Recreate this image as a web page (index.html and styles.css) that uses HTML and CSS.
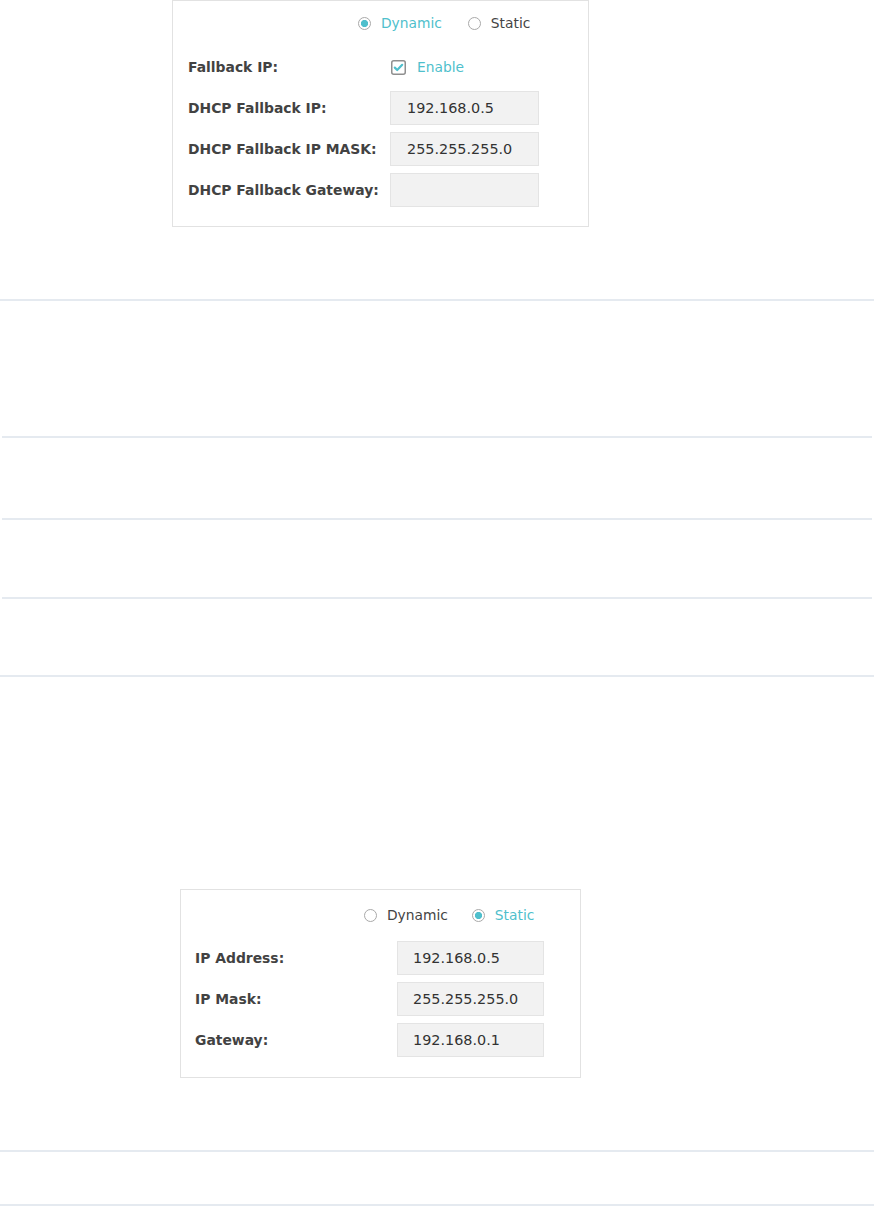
FILE: index.html
```html
<!DOCTYPE html>
<html lang="en">
<head>
<meta charset="utf-8">
<title>IP Settings</title>
<link rel="stylesheet" href="styles.css">
</head>
<body>
<div class="page">
  <div class="panel panel-a">
    <div class="radio-row">
      <span class="radio-item"><span class="radio checked"></span><span class="radio-text active">Dynamic</span></span>
      <span class="radio-item"><span class="radio"></span><span class="radio-text">Static</span></span>
    </div>
    <div class="row row-check">
      <span class="label">Fallback IP:</span>
      <span class="check-item">
        <svg class="checkbox" width="15" height="15" viewBox="0 0 15 15"><rect x="0.75" y="0.75" width="13.5" height="13.5" rx="2" fill="#fff" stroke="#8f8f8f" stroke-width="1.5"/><path d="M3.8 7.6 L6.2 10 L11.2 4.8" fill="none" stroke="#4fbfcc" stroke-width="2.2" stroke-linecap="round" stroke-linejoin="round"/></svg>
        <span class="radio-text active">Enable</span>
      </span>
    </div>
    <div class="fields">
      <div class="row"><span class="label">DHCP Fallback IP:</span><span class="input">192.168.0.5</span></div>
      <div class="row"><span class="label">DHCP Fallback IP MASK:</span><span class="input">255.255.255.0</span></div>
      <div class="row"><span class="label">DHCP Fallback Gateway:</span><span class="input"></span></div>
    </div>
  </div>

  <div class="rule r1"></div>
  <div class="rule inset r2"></div>
  <div class="rule inset r3"></div>
  <div class="rule inset r4"></div>
  <div class="rule r5"></div>

  <div class="panel panel-b">
    <div class="radio-row">
      <span class="radio-item"><span class="radio"></span><span class="radio-text">Dynamic</span></span>
      <span class="radio-item"><span class="radio checked"></span><span class="radio-text active">Static</span></span>
    </div>
    <div class="fields">
      <div class="row"><span class="label">IP Address:</span><span class="input">192.168.0.5</span></div>
      <div class="row"><span class="label">IP Mask:</span><span class="input">255.255.255.0</span></div>
      <div class="row"><span class="label">Gateway:</span><span class="input">192.168.0.1</span></div>
    </div>
  </div>

  <div class="rule r6"></div>
  <div class="rule r7"></div>
</div>
</body>
</html>
```

FILE: styles.css
```css
html, body {
  margin: 0;
  padding: 0;
  background: #ffffff;
}
body {
  font-family: "DejaVu Sans", Verdana, sans-serif;
  color: #333333;
}
.page {
  display: flex;
  flex-direction: column;
  width: 874px;
}
.panel {
  box-sizing: border-box;
  border: 1px solid #e2e2e2;
  align-self: flex-start;
}
.panel-a {
  margin-left: 172px;
  width: 417px;
  padding: 12px 0 19px 15px;
}
.panel-b {
  margin-top: 212px;
  margin-left: 180px;
  width: 401px;
  padding: 15px 0 20px 14px;
}
.radio-row {
  display: flex;
  align-items: center;
  height: 20px;
  padding-left: 170px;
  gap: 26px;
}
.panel-b .radio-row {
  padding-left: 169px;
  gap: 24px;
}
.radio-item {
  display: flex;
  align-items: center;
  gap: 10px;
}
.radio {
  box-sizing: border-box;
  width: 13px;
  height: 13px;
  border: 1px solid #a9a9a9;
  border-radius: 50%;
  background: #ffffff;
}
.radio.checked {
  background: radial-gradient(circle, #4fbfcc 0 3.3px, #ffffff 3.9px);
}
.radio-text {
  font-size: 13.8px;
  color: #444444;
}
.radio-text.active {
  color: #4fbfcc;
}
.row {
  display: flex;
  align-items: center;
}
.row-check {
  height: 20px;
  margin-top: 24px;
}
.label {
  width: 202px;
  flex: none;
  font-size: 13.9px;
  font-weight: bold;
  color: #424242;
}
.check-item {
  display: flex;
  align-items: center;
  gap: 11px;
  margin-left: 1px;
}
.checkbox {
  display: block;
}
.fields {
  display: flex;
  flex-direction: column;
  gap: 7px;
  margin-top: 14px;
}
.panel-b .fields {
  margin-top: 16px;
}
.input {
  box-sizing: border-box;
  width: 149px;
  height: 34px;
  background: #f2f2f2;
  border: 1px solid #e4e4e4;
  padding-left: 16px;
  font-size: 14.4px;
  line-height: 32px;
  color: #333333;
}
.panel-b .input {
  width: 147px;
  padding-left: 15px;
}
.rule {
  height: 2px;
  background: #e5eaf0;
  flex: none;
}
.rule.inset {
  margin-left: 2px;
  margin-right: 2px;
}
.r1 { margin-top: 72px; }
.r2 { margin-top: 135px; }
.r3 { margin-top: 80px; }
.r4 { margin-top: 77px; }
.r5 { margin-top: 76px; }
.r6 { margin-top: 72px; }
.r7 { margin-top: 52px; }
```
